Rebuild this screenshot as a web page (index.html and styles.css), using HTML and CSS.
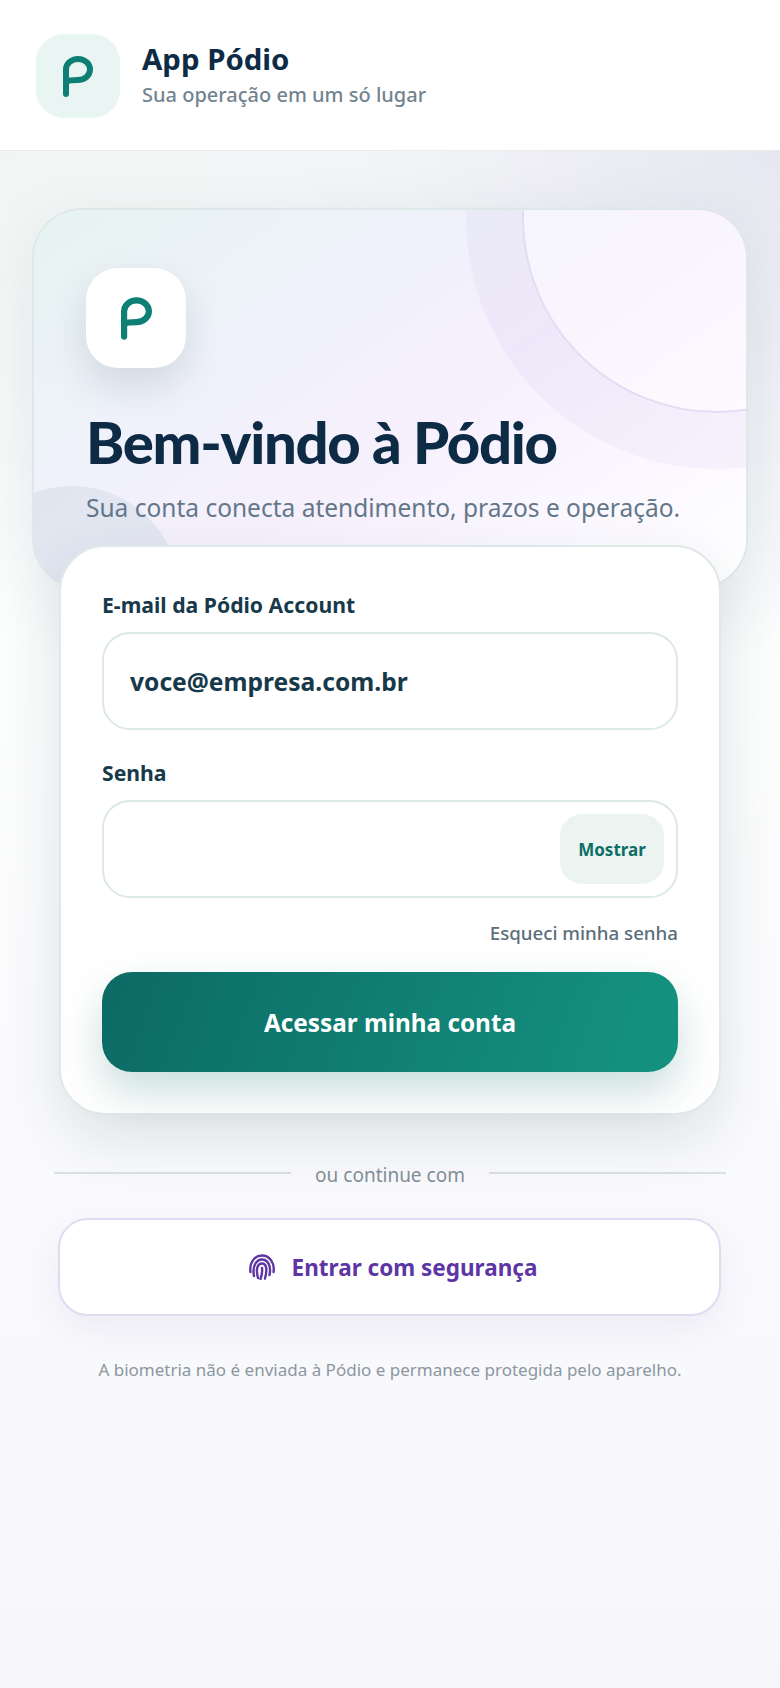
FILE: index.html
```html
<!DOCTYPE html>
<html lang="pt-BR">
<head>
    <meta charset="UTF-8">
    <meta name="viewport" content="width=device-width, initial-scale=1.0">
    <title>App Pódio</title>
    <link rel="stylesheet" href="styles.css">
</head>
<body>
    <header class="topbar">
        <div class="topbar-logo">
            <svg class="logo-mark" viewBox="0 0 30 41"><path d="M3 38V13.500A12 10.500 0 1 1 15 24C10 24 6 24 3 25.500" /></svg>
        </div>
        <div class="topbar-text">
            <div class="topbar-title">App Pódio</div>
            <div class="topbar-sub">Sua operação em um só lugar</div>
        </div>
    </header>

    <main class="page">
        <section class="hero">
            <div class="hero-logo">
                <svg class="logo-mark" viewBox="0 0 30 41"><path d="M3 38V13.500A12 10.500 0 1 1 15 24C10 24 6 24 3 25.500" /></svg>
            </div>
            <h1>Bem-vindo à Pódio</h1>
            <p>Sua conta conecta atendimento, prazos e operação.</p>
        </section>

        <form class="login-card">
            <label for="email">E-mail da Pódio Account</label>
            <input type="email" id="email" class="field" value="voce@empresa.com.br">

            <label for="senha">Senha</label>
            <div class="field password">
                <input type="password" id="senha">
                <button type="button" class="show-btn">Mostrar</button>
            </div>

            <a href="#" class="forgot">Esqueci minha senha</a>
            <button type="submit" class="submit-btn">Acessar minha conta</button>
        </form>

        <div class="divider"><span>ou continue com</span></div>

        <button type="button" class="bio-btn">
            <svg class="bio-icon" viewBox="0 0 26 26">
                <path d="M1.500 18C0 9 5.500 1.500 13 1.500S26 9 24.500 18" />
                <path d="M5 22C3 12 7.500 5.500 13 5.500S22.500 11.500 20.500 21" />
                <path d="M9 24C6.500 15 8.500 9.500 13 9.500S18.500 15 16 24.500" />
                <path d="M13 14C13.500 18 13 21 11.500 25" />
            </svg>
            Entrar com segurança
        </button>

        <p class="note">A biometria não é enviada à Pódio e permanece protegida pelo aparelho.</p>
    </main>
</body>
</html>
```

FILE: styles.css
```css
* {
    box-sizing: border-box;
}

body {
    margin: 0;
    min-height: 1688px;
    font-family: "Noto Sans", sans-serif;
    background-color: #f7f7fb;
    background-image:
        radial-gradient(620px 420px at 0 150px, #f1f5f4, transparent),
        radial-gradient(700px 500px at 780px 150px, #e7e7f1, transparent),
        linear-gradient(#fcfdfd 40%, #f7f7fb);
}

.topbar {
    display: flex;
    align-items: center;
    gap: 22px;
    height: 151px;
    padding-top: 2px;
    padding-left: 36px;
    background: #fff;
    border-bottom: 1px solid #e8edec;
}

.topbar-logo {
    display: flex;
    align-items: center;
    justify-content: center;
    width: 84px;
    height: 84px;
    border-radius: 28px;
    background: #e9f5f2;
}

.topbar-text {
    padding-top: 2px;
}

.topbar-title {
    font-size: 29.400px;
    font-weight: 700;
    line-height: 36px;
    color: #0d2b45;
}

.topbar-sub {
    font-size: 20px;
    font-weight: 500;
    line-height: 36px;
    color: #72848f;
}

.logo-mark {
    width: 30px;
    height: 41px;
    fill: none;
    stroke: #0d7f75;
    stroke-width: 6;
    stroke-linecap: round;
}

.page {
    padding: 57px 32px 0;
}

.hero {
    position: relative;
    overflow: hidden;
    height: 381px;
    padding: 58px 52px 0;
    border: 2px solid #dfe8e8;
    border-radius: 50px;
    background: linear-gradient(145deg, #e5f3f0 0%, #eff2fa 30%, #f6f0fd 55%, #fcfaff 85%, #fff 100%);
    box-shadow: 0 20px 70px rgba(20, 50, 70, 0.1);
}

.hero::before {
    content: "";
    position: absolute;
    top: -187px;
    right: -166px;
    width: 386px;
    height: 386px;
    border: 2px solid #e3dcf5;
    border-radius: 50%;
    background: rgba(255, 255, 255, 0.3);
    box-shadow: 0 0 0 56px rgba(120, 90, 200, 0.05);
}

.hero::after {
    content: "";
    position: absolute;
    top: 276px;
    left: -70px;
    width: 216px;
    height: 216px;
    border-radius: 50%;
    background: rgba(20, 80, 100, 0.07);
}

.hero-logo {
    position: relative;
    z-index: 1;
    display: flex;
    align-items: center;
    justify-content: center;
    width: 100px;
    height: 100px;
    border-radius: 32px;
    background: #fff;
    box-shadow: 0 18px 40px rgba(20, 50, 70, 0.13);
}

.hero-logo .logo-mark {
    width: 31px;
    height: 43px;
}

.hero h1 {
    position: relative;
    z-index: 1;
    margin: 39px 0 0;
    font-family: Lato, "Noto Sans", sans-serif;
    font-size: 58px;
    font-weight: 900;
    line-height: 70px;
    letter-spacing: -1.300px;
    color: #0d2b45;
    white-space: nowrap;
}

.hero p {
    position: relative;
    z-index: 1;
    margin: 13px 0 0;
    font-size: 24.500px;
    line-height: 36px;
    color: #64778a;
    white-space: nowrap;
}

.login-card {
    position: relative;
    z-index: 2;
    display: flex;
    flex-direction: column;
    height: 570px;
    margin: -44px 27px 0;
    padding: 44px 41px 0 41px;
    border: 2px solid #e0e9e9;
    border-radius: 46px;
    background: #fff;
    box-shadow: 0 24px 60px rgba(20, 50, 70, 0.12);
}

.login-card label {
    font-size: 21.200px;
    font-weight: 700;
    line-height: 28px;
    color: #17394a;
}

.field {
    width: 100%;
    height: 98px;
    margin: 13px 0 29px;
    padding: 0 26px;
    border: 2px solid #dde8e8;
    border-radius: 28px;
    background: #fff;
    font-family: inherit;
    font-size: 24.600px;
    font-weight: 700;
    color: #17394a;
}

.password {
    display: flex;
    align-items: center;
    justify-content: flex-end;
    margin-bottom: 21px;
    padding: 0 12px 0 26px;
}

.password input {
    flex: 1;
    min-width: 0;
    border: 0;
    outline: 0;
    font: inherit;
}

.show-btn {
    width: 104px;
    height: 70px;
    border: 0;
    border-radius: 22px;
    background: #ecf4f2;
    font-family: inherit;
    font-size: 17px;
    font-weight: 700;
    color: #0d6e66;
}

.forgot {
    align-self: flex-end;
    font-size: 18.700px;
    font-weight: 500;
    line-height: 28px;
    color: #5a6e7c;
    text-decoration: none;
}

.submit-btn {
    height: 100px;
    margin-top: 25px;
    border: 0;
    border-radius: 30px;
    background: linear-gradient(110deg, #0c6a64, #14907f 90%);
    font-family: inherit;
    font-size: 24.300px;
    font-weight: 700;
    color: #fff;
    box-shadow: 0 20px 40px rgba(13, 110, 100, 0.22);
}

.divider {
    display: flex;
    align-items: center;
    gap: 24px;
    margin: 38px 22px 0;
    font-size: 19px;
    line-height: 36px;
    color: #82909a;
}

.divider span {
    padding-top: 4px;
}

.divider::before,
.divider::after {
    content: "";
    flex: 1;
    height: 2px;
    background: #d9e1e2;
}

.bio-btn {
    display: flex;
    align-items: center;
    justify-content: center;
    gap: 17px;
    width: 663px;
    height: 98px;
    margin: 25px 0 0 26px;
    padding: 0 0 0 7px;
    border: 2px solid #e0dbf1;
    border-radius: 30px;
    background: #fff;
    font-family: inherit;
    font-size: 22.500px;
    font-weight: 700;
    color: #5e35a5;
    box-shadow: 0 14px 34px rgba(80, 60, 160, 0.07);
}

.bio-icon {
    width: 26px;
    height: 26px;
    fill: none;
    stroke: #5e35a5;
    stroke-width: 2.400;
    stroke-linecap: round;
}

.note {
    margin: 40px 0 0 27px;
    width: 662px;
    font-size: 17px;
    line-height: 28px;
    text-align: center;
    color: #8b97a1;
}
```
